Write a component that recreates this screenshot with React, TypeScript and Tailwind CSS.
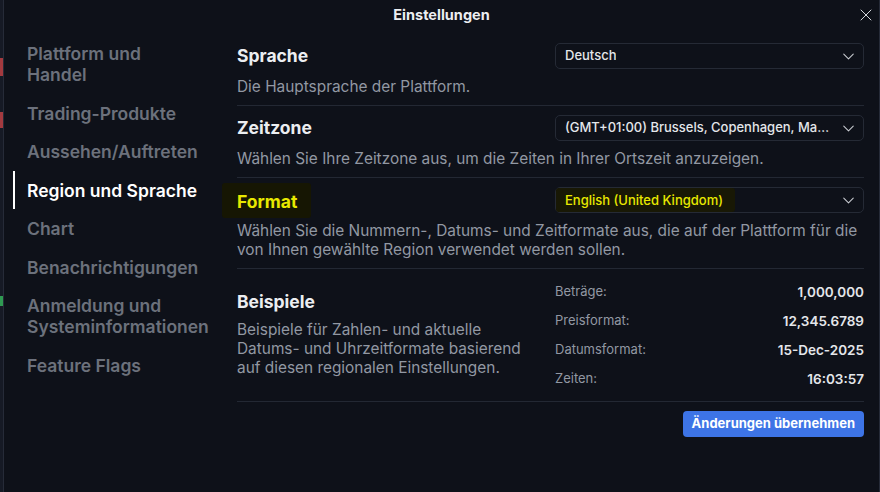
import { X, ChevronDown } from "lucide-react";

const navItems = [
  "Plattform und Handel",
  "Trading-Produkte",
  "Aussehen/Auftreten",
  "Region und Sprache",
  "Chart",
  "Benachrichtigungen",
  "Anmeldung und Systeminformationen",
  "Feature Flags",
];

const examples = [
  { label: "Beträge:", value: "1,000,000" },
  { label: "Preisformat:", value: "12,345.6789" },
  { label: "Datumsformat:", value: "15-Dec-2025" },
  { label: "Zeiten:", value: "16:03:57" },
];

const Select = ({ value, highlight = false }: { value: string; highlight?: boolean }) => (
  <div className="w-[309px] h-[26px] shrink-0 flex items-center justify-between rounded-[5px] border border-[#252a35] pl-[9px] pr-[5px]">
    <span
      className={
        highlight
          ? "text-[13px] font-medium text-[#e8e800] bg-[#181805] rounded-[3px] -ml-[9px] pl-[9px] pr-[12px] leading-[24px] truncate"
          : "text-[13px] font-medium text-[#e4e6ea] truncate"
      }
    >
      {value}
    </span>
    <ChevronDown className="w-[19px] h-[19px] text-[#c9ccd2] shrink-0 ml-[6px]" strokeWidth={1.3} />
  </div>
);

const Section = ({
  title,
  value,
  desc,
  highlight = false,
}: {
  title: string;
  value: string;
  desc: string;
  highlight?: boolean;
}) => (
  <div className="pt-[9px] pb-[9px] border-b border-[#232833]">
    <div className="flex items-center justify-between">
      {highlight ? (
        <span className="-ml-[15px] pl-[15px] pr-[14px] pt-[7px] pb-[4px] -mt-[5px] -mb-[5px] bg-[#161603] rounded-[3px] text-[17.5px] font-bold text-[#e8e800] leading-[24px]">
          {title}
        </span>
      ) : (
        <span className="text-[17.5px] font-bold text-[#eceef1] leading-[24px]">{title}</span>
      )}
      <Select value={value} highlight={highlight} />
    </div>
    <p className="mt-[8px] text-[15.4px] leading-[19px] text-[#9298a3]">{desc}</p>
  </div>
);

export default function App() {
  return (
    <div
      className="w-[880px] h-[492px] flex bg-[#0e1119] overflow-hidden"
      style={{ fontFamily: "Inter, 'Noto Sans', sans-serif" }}
    >
      {/* chart behind the dialog */}
      <div className="w-[3px] flex flex-col bg-[#161a25]">
        <div className="h-[58px]" />
        <div className="h-[18px] bg-[#a33a3f]" />
        <div className="h-[36px]" />
        <div className="h-[16px] bg-[#a33a3f]" />
        <div className="h-[168px]" />
        <div className="h-[10px] bg-[#2f9a52]" />
      </div>
      <div className="flex-1 flex flex-col border-l border-[#262b38] border-r">
        <div className="h-[30px] relative flex items-center justify-center">
          <span className="text-[14.5px] font-bold text-[#eceef1]">Einstellungen</span>
          <X className="absolute right-[3px] top-[5px] w-[20px] h-[20px] text-[#d5d8dd]" strokeWidth={1.2} />
        </div>
        <div className="flex flex-1">
          <nav className="w-[218px] shrink-0 pt-[13px] flex flex-col gap-[17.5px]">
            {navItems.map((item) => {
              const active = item === "Region und Sprache";
              return (
                <div key={item} className="relative pl-[23px]">
                  {active && (
                    <div className="absolute left-[9px] -top-[9px] -bottom-[8px] w-[2px] bg-white" />
                  )}
                  <span
                    className={
                      active
                        ? "block w-[174px] text-[17.5px] leading-[21px] font-semibold text-white"
                        : "block w-[174px] text-[17.5px] leading-[21px] font-semibold text-[#6c717c]"
                    }
                  >
                    {item}
                  </span>
                </div>
              );
            })}
          </nav>
          <main className="flex-1 pl-[15px] pr-[15px] pt-[4px]">
            <Section title="Sprache" value="Deutsch" desc="Die Hauptsprache der Plattform." />
            <Section
              title="Zeitzone"
              value="(GMT+01:00) Brussels, Copenhagen, Madrid, Paris"
              desc="Wählen Sie Ihre Zeitzone aus, um die Zeiten in Ihrer Ortszeit anzuzeigen."
            />
            <Section
              title="Format"
              value="English (United Kingdom)"
              highlight
              desc="Wählen Sie die Nummern-, Datums- und Zeitformate aus, die auf der Plattform für die von Ihnen gewählte Region verwendet werden sollen."
            />
            <div className="flex justify-between pt-[13px] pb-[12px] border-b border-[#232833]">
              <div className="pt-[8px] w-[295px]">
                <h3 className="text-[17.5px] font-bold text-[#eceef1] leading-[24px]">Beispiele</h3>
                <p className="mt-[6px] text-[15.4px] leading-[19px] text-[#9298a3]">
                  Beispiele für Zahlen- und aktuelle Datums- und Uhrzeitformate basierend auf diesen regionalen Einstellungen.
                </p>
              </div>
              <div className="w-[309px] flex flex-col gap-[9px]">
                {examples.map((e) => (
                  <div key={e.label} className="flex justify-between items-center h-[20px]">
                    <span className="text-[13px] text-[#9298a3]">{e.label}</span>
                    <span className="text-[13.5px] font-semibold text-[#e4e6ea]">{e.value}</span>
                  </div>
                ))}
              </div>
            </div>
            <div className="flex justify-end pt-[9px]">
              <button className="h-[26px] px-[9px] rounded-[4px] bg-[#3d74e6] text-[13px] font-bold text-white">
                Änderungen übernehmen
              </button>
            </div>
          </main>
        </div>
      </div>
    </div>
  );
}
